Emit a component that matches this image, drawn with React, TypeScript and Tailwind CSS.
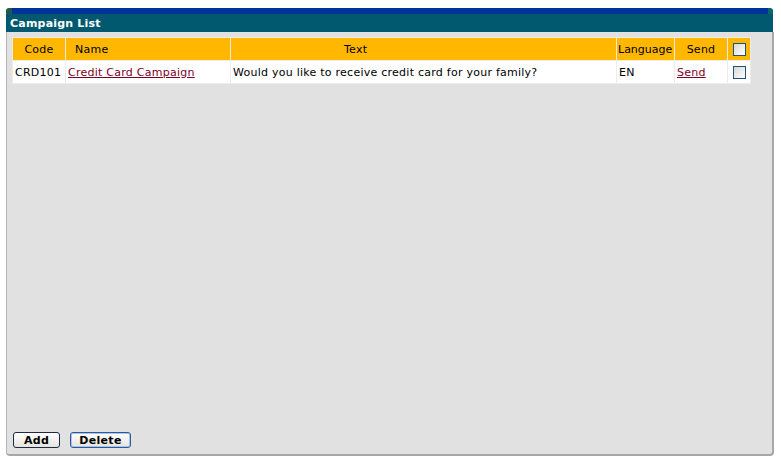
import React from "react";

const font = { fontFamily: '"DejaVu Sans", Verdana, sans-serif' };

function Check() {
  return (
    <span className="inline-block w-[13px] h-[13px] border border-[#1c5180] bg-gradient-to-br from-[#d8d8d2] to-white align-middle" />
  );
}

export default function App() {
  return (
    <div className="w-[781px] h-[465px] bg-white pt-[8px] pl-[6px]" style={font}>
      <div className="w-[768px] h-[448px] flex flex-col">
        {/* title */}
        <div className="flex h-[6px]">
          <div className="w-[6px] bg-[#1f5a4c] rounded-tl-[3px]" />
          <div className="flex-1 bg-[#003399]" />
          <div className="w-[5px] bg-[#0a6468] rounded-tr-[3px]" />
          <div className="w-px" />
        </div>
        <div className="h-[18px] bg-[#01596f] mr-px flex items-center pl-[4px] text-white text-[11px] font-bold leading-none tracking-[0.2px]">
          Campaign List
        </div>
        <div className="flex-1 bg-[#e1e1e1] border-l border-r-2 border-b-2 border-[#a8a8a8] border-l-[#b4b4b4] rounded-b-[4px] flex flex-col pl-[6px] pt-[6px] pb-[6px]">
          <table className="table-fixed border-separate border-spacing-[1px] bg-[#ececec] -ml-px -mt-px w-[739px] text-[11px] text-black leading-none tracking-[0.25px]">
            <colgroup>
              <col className="w-[52px]" />
              <col className="w-[164px]" />
              <col className="w-[385px]" />
              <col className="w-[57px]" />
              <col className="w-[52px]" />
              <col className="w-[22px]" />
            </colgroup>
            <thead>
              <tr className="h-[22px] bg-[#ffb700]">
                <th className="font-normal text-center p-0">Code</th>
                <th className="font-normal text-left p-0 pl-[9px]">Name</th>
                <th className="font-normal text-left p-0 pl-[113px]">Text</th>
                <th className="font-normal text-left p-0 pl-[1px] tracking-normal whitespace-nowrap">Language</th>
                <th className="font-normal text-center p-0">Send</th>
                <th className="p-0 text-center"><Check /></th>
              </tr>
            </thead>
            <tbody>
              <tr className="h-[22px] bg-white">
                <td className="p-0 pl-[2px] whitespace-nowrap">CRD101</td>
                <td className="p-0 pl-[2px] whitespace-nowrap">
                  <a className="text-[#7a0025] underline">Credit Card Campaign</a>
                </td>
                <td className="p-0 pl-[2px] whitespace-nowrap">Would you like to receive credit card for your family?</td>
                <td className="p-0 pl-[2px]">EN</td>
                <td className="p-0 pl-[2px]">
                  <a className="text-[#7a0025] underline">Send</a>
                </td>
                <td className="p-0 text-center"><Check /></td>
              </tr>
            </tbody>
          </table>
          <div className="mt-auto flex gap-[10px] pl-[0px]">
            <button className="w-[47px] h-[16px] rounded-[3px] border border-[#1e2a44] bg-gradient-to-b from-white to-[#e6e4dc] text-[11px] font-bold leading-none text-black tracking-[0.3px]">
              Add
            </button>
            <button className="w-[61px] h-[16px] rounded-[3px] border border-[#2a5a9a] bg-gradient-to-b from-white to-[#e6e4dc] text-[11px] font-bold leading-none text-black tracking-[0.3px] shadow-[inset_0_0_0_1px_#a8c4ec]">
              Delete
            </button>
          </div>
        </div>
      </div>
    </div>
  );
}
